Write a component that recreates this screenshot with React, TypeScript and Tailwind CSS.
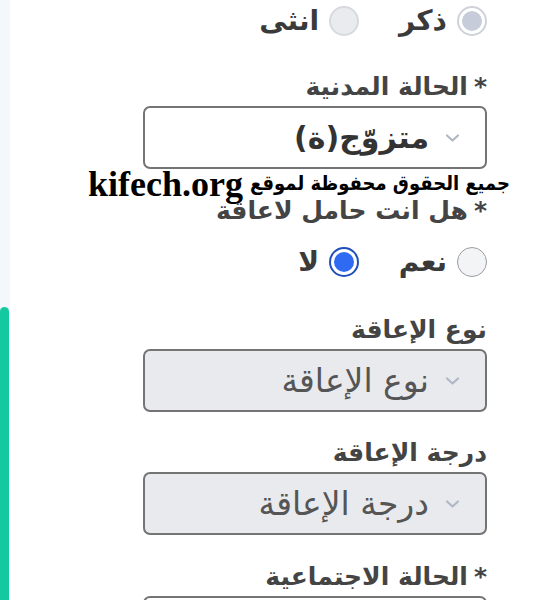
import React from "react";

const ar = { fontFamily: '"DejaVu Sans", "Noto Sans", sans-serif' };

const Radio = ({ state }: { state: "off" | "offLight" | "disabledOn" | "on" }) => {
  if (state === "on")
    return (
      <span className="w-[30px] h-[30px] rounded-full border-[2px] border-[#1f4fb8] bg-white flex items-center justify-center">
        <span className="w-[20px] h-[20px] rounded-full bg-[#2f6bf2]" />
      </span>
    );
  if (state === "disabledOn")
    return (
      <span className="w-[30px] h-[30px] rounded-full border-[2px] border-[#cfd2d8] bg-white flex items-center justify-center">
        <span className="w-[20px] h-[20px] rounded-full bg-[#c6ccda]" />
      </span>
    );
  if (state === "offLight")
    return <span className="w-[30px] h-[30px] rounded-full border-[2px] border-[#d6d9de] bg-[#e9ebef]" />;
  return <span className="w-[30px] h-[30px] rounded-full border-[1.5px] border-[#9a9ca0] bg-[#f3f4f6]" />;
};

const Option = ({ label, state }: { label: string; state: "off" | "offLight" | "disabledOn" | "on" }) => (
  <div className="w-[128px] flex items-center gap-[10px]">
    <Radio state={state} />
    <span className="text-[28px] font-bold text-[#3a3a3a] leading-none">{label}</span>
  </div>
);

const Chevron = () => (
  <svg width="15" height="10" viewBox="0 0 15 10" className="shrink-0">
    <path d="M2 2.5 L7.5 7.5 L13 2.5" fill="none" stroke="#b0b7c5" strokeWidth="2.2" strokeLinecap="round" strokeLinejoin="round" />
  </svg>
);

const Select = ({ value, disabled }: { value: string; disabled?: boolean }) => (
  <div
    className={`h-[63px] rounded-[7px] border-[2px] border-[#747474] flex items-center gap-[16px] pr-[25px] ${
      disabled ? "bg-[#e9eaee]" : "bg-white"
    }`}
  >
    <Chevron />
    <span className={`leading-none ${disabled ? "text-[33px] font-normal text-[#555]" : "text-[30px] font-bold text-[#333]"}`}>
      {value}
    </span>
  </div>
);

const Label = ({ text, req }: { text: string; req?: boolean }) => (
  <div className="text-[25px] font-bold text-[#444] leading-[28px]">
    {req && <span className="ml-[6px]">*</span>}
    {text}
  </div>
);

export default function App() {
  return (
    <div className="w-[555px] h-[600px] bg-white flex overflow-hidden" style={ar}>
      {/* ---- left strip ---- */}
      <div className="w-[10px] bg-[#f4f7fb] flex flex-col">
        <div className="h-[307px]" />
        <div className="flex-1 w-[9px] bg-[#12c9a1] rounded-t-[5px]" />
      </div>

      {/* ---- form ---- */}
      <div dir="rtl" className="w-[344px] ml-[133px] flex flex-col pt-[6px]">
        <div className="flex h-[30px] items-center">
          <Option label="ذكر" state="disabledOn" />
          <Option label="انثى" state="offLight" />
        </div>

        <div className="mt-[37px]">
          <Label text="الحالة المدنية" req />
        </div>
        <div className="mt-[5px]">
          <Select value="متزوّج(ة)" />
        </div>

        {/* ---- watermark ---- */}
        <div className="w-[420px] mr-[-23px] mt-[1px] whitespace-nowrap text-black leading-[27px] h-[27px] flex items-center">
          <span style={{ fontFamily: '"DejaVu Sans Condensed", "DejaVu Sans", sans-serif' }} className="text-[20px] font-bold">
            جميع الحقوق محفوظة لموقع
          </span>
          <span
            style={{ fontFamily: '"Liberation Serif", serif' }}
            className="text-[36px] font-bold mr-[7px] leading-none"
          >
            kifech.org
          </span>
        </div>

        <div>
          <Label text="هل انت حامل لاعاقة" req />
        </div>
        <div className="flex h-[30px] items-center mt-[22px]">
          <Option label="نعم" state="off" />
          <Option label="لا" state="on" />
        </div>

        <div className="mt-[39px]">
          <Label text="نوع الإعاقة" />
        </div>
        <div className="mt-[5px]">
          <Select value="نوع الإعاقة" disabled />
        </div>

        <div className="mt-[27px]">
          <Label text="درجة الإعاقة" />
        </div>
        <div className="mt-[5px]">
          <Select value="درجة الإعاقة" disabled />
        </div>

        <div className="mt-[28px]">
          <Label text="الحالة الاجتماعية" req />
        </div>
        <div className="mt-[5px]">
          <Select value="" />
        </div>
      </div>
    </div>
  );
}
